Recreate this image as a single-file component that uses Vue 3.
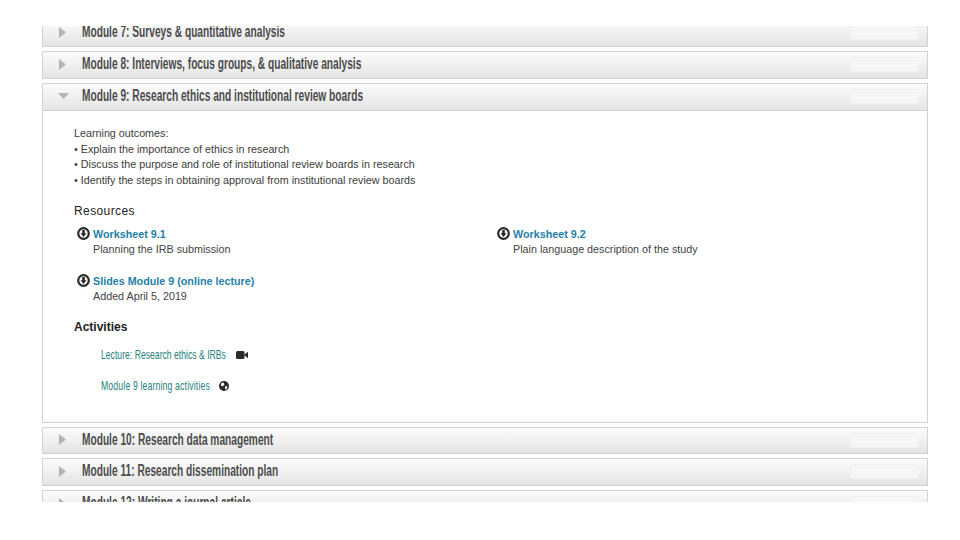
<script setup>
const before = [
  { id: 7, title: 'Module 7: Surveys & quantitative analysis' },
  { id: 8, title: 'Module 8: Interviews, focus groups, & qualitative analysis' },
]
const after = [
  { id: 10, title: 'Module 10: Research data management' },
  { id: 11, title: 'Module 11: Research dissemination plan' },
  { id: 12, title: 'Module 12: Writing a journal article' },
]
const outcomes = [
  'Explain the importance of ethics in research',
  'Discuss the purpose and role of institutional review boards in research',
  'Identify the steps in obtaining approval from institutional review boards',
]
</script>

<template>
  <div class="page">
    <div class="clip">
      <div class="stack">
        <div v-for="m in before" :key="m.id" class="row">
          <svg class="arrow" width="7" height="11" viewBox="0 0 7 11"><path d="M0 0L7 5.500L0 11Z" /></svg>
          <span class="title">{{ m.title }}</span>
          <span class="pill"></span>
        </div>

        <div class="open">
          <div class="row flat">
            <svg class="arrow down" width="11" height="6" viewBox="0 0 11 6"><path d="M0 0H11L5.500 6Z" /></svg>
            <span class="title">Module 9: Research ethics and institutional review boards</span>
            <span class="pill"></span>
          </div>
          <div class="body">
            <p class="line">Learning outcomes:</p>
            <p v-for="o in outcomes" :key="o" class="line">• {{ o }}</p>

            <h4 class="res-head">Resources</h4>
            <div class="files">
              <div class="file">
                <svg class="dl" width="13" height="13" viewBox="0 0 13 13"><circle cx="6.500" cy="6.500" r="5.300" fill="#fff" stroke="#2a2a2a" stroke-width="2.200" /><path d="M5.200 3h2.600v3.300h1.700L6.500 10 3.500 6.300h1.700z" fill="#2a2a2a" /></svg>
                <div>
                  <a class="file-link">Worksheet 9.1</a>
                  <div class="file-note">Planning the IRB submission</div>
                </div>
              </div>
              <div class="file">
                <svg class="dl" width="13" height="13" viewBox="0 0 13 13"><circle cx="6.500" cy="6.500" r="5.300" fill="#fff" stroke="#2a2a2a" stroke-width="2.200" /><path d="M5.200 3h2.600v3.300h1.700L6.500 10 3.500 6.300h1.700z" fill="#2a2a2a" /></svg>
                <div>
                  <a class="file-link">Worksheet 9.2</a>
                  <div class="file-note">Plain language description of the study</div>
                </div>
              </div>
              <div class="file">
                <svg class="dl" width="13" height="13" viewBox="0 0 13 13"><circle cx="6.500" cy="6.500" r="5.300" fill="#fff" stroke="#2a2a2a" stroke-width="2.200" /><path d="M5.200 3h2.600v3.300h1.700L6.500 10 3.500 6.300h1.700z" fill="#2a2a2a" /></svg>
                <div>
                  <a class="file-link">Slides Module 9 (online lecture)</a>
                  <div class="file-note">Added April 5, 2019</div>
                </div>
              </div>
            </div>

            <h4 class="act-head">Activities</h4>
            <div class="activity first">
              <a class="act-link">Lecture: Research ethics &amp; IRBs</a>
              <svg width="12" height="8" viewBox="0 0 12 8"><rect x="0" y="0" width="8.500" height="8" rx="1.500" fill="#2a2a2a" /><path d="M8.500 3.500L12 0.800V7.200L8.500 4.500Z" fill="#2a2a2a" /></svg>
            </div>
            <div class="activity second">
              <a class="act-link">Module 9 learning activities</a>
              <svg width="10" height="10" viewBox="0 0 10 10"><circle cx="5" cy="5" r="5" fill="#2a2a2a" /><path d="M2 2.500L4.500 1.500L5.500 3.500L3.500 5.500L2 4.500ZM6 5.500L8.500 5L7.500 8.500L6 8Z" fill="#fff" /></svg>
            </div>
          </div>
        </div>

        <div v-for="m in after" :key="m.id" class="row">
          <svg class="arrow" width="7" height="11" viewBox="0 0 7 11"><path d="M0 0L7 5.500L0 11Z" /></svg>
          <span class="title">{{ m.title }}</span>
          <span class="pill"></span>
        </div>
      </div>
    </div>
  </div>
</template>

<style>
html, body {
  background: #fff;
}
</style>

<style scoped>
.page {
  width: 960px;
  height: 540px;
  padding-top: 26px;
  box-sizing: border-box;
  overflow: hidden;
  font-family: 'Liberation Sans', Arial, sans-serif;
}

.clip {
  height: 476px;
  overflow: hidden;
  padding: 0 32px 0 42px;
}

.stack {
  margin-top: -7px;
  display: flex;
  flex-direction: column;
  gap: 4px;
}

.row {
  height: 28px;
  box-sizing: border-box;
  flex-shrink: 0;
  display: flex;
  align-items: center;
  border: 1px solid #d2d2d2;
  background: linear-gradient(#fcfcfc, #e4e4e4);
  position: relative;
  padding-left: 16px;
}

.open + .row {
  height: 27px;
}

.row.flat {
  border: 0;
  border-bottom: 1px solid #d2d2d2;
  height: 27px;
  padding-left: 15px;
}

.arrow {
  fill: #b4b4b4;
  margin-right: 16px;
  margin-top: -2px;
  flex-shrink: 0;
}

.arrow.down {
  margin-right: 13px;
}

/* no condensed face installed, so squeeze the bold sans to the same width */
.title {
  font-weight: 700;
  font-size: 16px;
  color: #4c4c4c;
  white-space: nowrap;
  transform: scaleX(0.636);
  transform-origin: left center;
  margin-top: -2px;
}

.pill {
  position: absolute;
  right: 8px;
  top: 5px;
  width: 69px;
  height: 15px;
  border-radius: 3px;
  background: #f6f6f6;
  box-shadow: inset 0 0 0 1px #f0f0f0;
}

.open {
  border: 1px solid #d2d2d2;
  flex-shrink: 0;
}

.body {
  height: 311px;
  box-sizing: border-box;
  padding: 15px 0 0 31px;
  font-size: 10.750px;
  color: #3c3c3c;
}

.line {
  margin: 0;
  line-height: 15.500px;
}

.res-head {
  margin: 15px 0 0;
  font-size: 12px;
  font-weight: 400;
  color: #222;
  line-height: 16px;
  letter-spacing: 0.4px;
}

.files {
  display: grid;
  grid-template-columns: 420px 1fr;
  row-gap: 15px;
  margin-top: 7px;
  margin-left: 3px;
}

.file {
  display: flex;
  gap: 3px;
}

.dl {
  margin-top: 1px;
  flex-shrink: 0;
}

.file-link {
  display: block;
  font-size: 10.750px;
  font-weight: 700;
  color: #1f7fa8;
  line-height: 16px;
}

.file-note {
  line-height: 15.500px;
  color: #444;
}

.act-head {
  margin: 15px 0 0;
  font-size: 12px;
  font-weight: 700;
  color: #222;
  line-height: 16px;
}

.activity {
  display: flex;
  align-items: center;
  gap: 10px;
  margin: 15px 0 0 27px;
  line-height: 16px;
}

.activity.first {
  margin-top: 12px;
}

.act-link {
  font-size: 13px;
  color: #267f7c;
  white-space: nowrap;
  transform: scaleX(0.665);
  transform-origin: left center;
}

.first .act-link {
  width: 125px;
}

.second .act-link {
  width: 108px;
  letter-spacing: 0.25px;
}
</style>
